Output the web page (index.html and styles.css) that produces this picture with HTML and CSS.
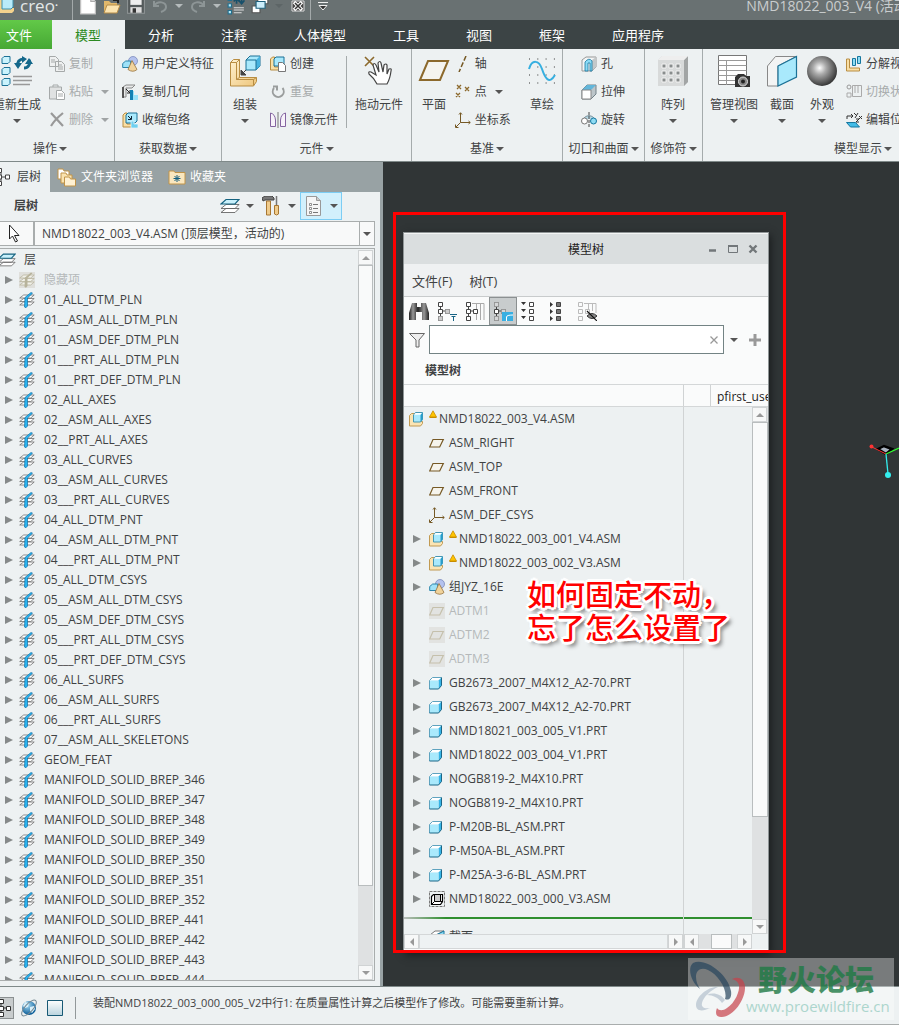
FILE: index.html
```html
<!DOCTYPE html>
<html lang="zh-CN">
<head>
<meta charset="utf-8">
<title>NMD18022_003_V4 - creo</title>
<link rel="stylesheet" href="styles.css">
</head>
<body>
<svg class="defs" aria-hidden="true">
  <linearGradient id="gold" x1="0" y1="0" x2="1" y2="1"><stop offset="0" stop-color="#fff1cf"/><stop offset="1" stop-color="#eec67c"/></linearGradient>
  <linearGradient id="ice" x1="0" y1="0" x2="0" y2="1"><stop offset="0" stop-color="#fdfefe"/><stop offset="1" stop-color="#b9d3de"/></linearGradient>
  <linearGradient id="metal" x1="0" y1="0" x2="1" y2="0"><stop offset="0" stop-color="#222"/><stop offset=".2" stop-color="#999"/><stop offset=".45" stop-color="#222"/><stop offset=".75" stop-color="#999"/><stop offset="1" stop-color="#222"/></linearGradient>
  <radialGradient id="ball" cx=".42" cy=".4" r=".62"><stop offset="0" stop-color="#fff"/><stop offset=".35" stop-color="#aaa"/><stop offset="1" stop-color="#333"/></radialGradient>
  <radialGradient id="globe" cx=".4" cy=".3" r=".7"><stop offset="0" stop-color="#a7dcf5"/><stop offset="1" stop-color="#075a96"/></radialGradient>
  <symbol id="part" viewBox="0 0 16 16"><path d="M.5 5.500l3-3h9l-3 3z" fill="#fff"/><path d="M9.500 5.500l3-3v8l-3 3.500z" fill="#36b4e6"/><path d="M.5 5.500h9v8.500h-9z" fill="#a9e9fc"/><path d="M.5 14V5.500l3-3h9" fill="none" stroke="#5fa3bf"/><path d="M12.500 2.500v8l-3 3.500h-9" fill="none" stroke="#1b6687"/></symbol>
  <symbol id="asm" viewBox="0 0 16 16"><path d="M.5 4.500l2-2h3v8h8v2l-2 2.500H.5z" fill="#fbe4b3" stroke="#c19a52"/><path d="M4.500 4l2-2.500h7v7l-2 2.500h-7z" fill="#a9e9fc" stroke="#4596b3"/><path d="M11.500 4l2-2.500v7l-2 2.500z" fill="#279dcc"/><path d="M5 3.700h6.200l1.500-1.700H6.700z" fill="#fff"/></symbol>
  <symbol id="plane" viewBox="0 0 16 16"><path d="M.7 12L4 4.500h10.300L10.700 12z" fill="#f6f4ec" stroke="#765925" stroke-width="1.200"/></symbol>
  <symbol id="plane-off" viewBox="0 0 16 16"><path d="M0 0h16v16H0z" fill="#e2e3e1"/><path d="M.7 12L4 4.500h10.300L10.700 12z" fill="none" stroke="#c5c0ac" stroke-width="1.200"/></symbol>
  <symbol id="csys" viewBox="0 0 16 16"><path d="M5.500 1v9.500H15M5.500 10.500L1 15M4 2.500L5.500.7 7 2.500M13.500 9l1.800 1.500-1.800 1.500M.5 12.500v3h3" fill="none" stroke="#765925"/></symbol>
  <symbol id="group" viewBox="0 0 16 16"><circle cx="11" cy="5" r="4.500" fill="#b4c2ee" stroke="#7c8bbd" stroke-width=".8"/><path d="M.7 7.500l3-2.500h5v6.500h-8z" fill="#9fe2f8" stroke="#2b84aa"/><path d="M10 4.500l5 9q-4 3.500-9 0z" fill="#f0d39c" stroke="#97713b" stroke-width=".8"/></symbol>
  <symbol id="layer" viewBox="0 0 16 16"><path d="M.7 6l4-3h10.500l-3.500 3zM.7 9.500l4-3h10.500l-3.500 3zM.7 13l4-3h10.500l-3.500 3z" fill="#fff" stroke="#707070" stroke-width=".8"/><path d="M6 5.500L12 .5l1.500.7L8.500 6v8L7 15.700 5.500 15z" fill="#2bb5f0" stroke="#0f70a8" stroke-width=".7"/></symbol>
  <symbol id="layer-off" viewBox="0 0 16 16"><path d="M0 0h16v16H0z" fill="#dfdfdb"/><path d="M.7 6l4-3h10.500l-3.500 3zM.7 9.500l4-3h10.500l-3.500 3zM.7 13l4-3h10.500l-3.500 3z" fill="#f1f1ea" stroke="#b9b5a0" stroke-width=".8"/><path d="M6 5.500L12 .5l1.500.7L8.500 6v8L7 15.700 5.500 15z" fill="#b7b39b"/></symbol>
  <symbol id="layers" viewBox="0 0 20 16"><path d="M1 14.500l5-4h13l-4 4zM1 10.500l5-4h13l-4 4z" fill="#fff" stroke="#666" stroke-width=".9"/><path d="M1 6l5-4.500h13L15 6z" fill="#c8f0fb" stroke="#146380" stroke-width="1.200"/></symbol>
  <symbol id="warn" viewBox="0 0 8 10"><path d="M4 .8L7.500 7h-7z" fill="#ffc400" stroke="#c88d00" stroke-width=".8"/><path d="M.5 7.500h7" stroke="#c88d00"/></symbol>
  <symbol id="tree" viewBox="0 0 20 20"><path d="M3.500 5v10M3.500 10h5" stroke="#444" fill="none"/><path d="M1.500 1.500h4v4h-4zM1.500 8.500h4v4h-4zM1.500 15.500h4v4h-4zM8.500 8.500h4v4h-4z" fill="#fff" stroke="#444"/></symbol>
</svg>

<header class="titlebar">
  <svg class="i16" viewBox="0 0 16 16"><path d="M0 2h6v8h8v3l-2 2H0z" fill="#f4d28d"/><path d="M2 1h11v8l-2 2H2z" fill="#b9ebfa" stroke="#3d90ad"/></svg>
  <span class="brand">creo<sup>•</sup></span>
  <span class="bar-sep"></span>
  <button class="qa" aria-label="新建"><svg class="i18" viewBox="0 0 16 16"><path d="M1.500 0h9l4 4v11h-13z" fill="#fff" stroke="#c5c5c5"/><path d="M10.500 0v4h4" fill="#d5d5d5" stroke="#aaa"/></svg></button>
  <button class="qa" aria-label="打开"><svg class="i18" viewBox="0 0 18 16"><path d="M1 3h5l2 2h6v10H1z" fill="#e2b86b"/><path d="M4 7h13l-3 8H1z" fill="#fce4b0" stroke="#b78d48"/><path d="M10 2h5v3" stroke="#222" stroke-width="2" fill="none"/></svg></button>
  <button class="qa" aria-label="保存"><svg class="i18" viewBox="0 0 16 16"><path d="M0 0h16v15H0z" fill="#8b9192"/><path d="M1 0h14v14H1z" fill="#555b5c"/><path d="M3 0h10v7H3z" fill="#eee"/><path d="M3 9h10v5H3z" fill="#ddd"/><path d="M5 10h3v4H5z" fill="#333"/></svg></button>
  <button class="qa" aria-label="撤消"><svg class="i16" viewBox="0 0 16 16"><path d="M2 3v5h5M2 8c4-6 12-4 12 1 0 3-2 4-5 5" fill="none" stroke="#8d9596" stroke-width="2"/></svg></button>
  <button class="qa qa-drop" aria-label="撤消列表"><i class="caret pale"></i></button>
  <button class="qa" aria-label="重做"><svg class="i16" viewBox="0 0 16 16"><path d="M14 3v5H9M14 8C10 2 2 4 2 9c0 3 2 4 5 5" fill="none" stroke="#8d9596" stroke-width="2"/></svg></button>
  <button class="qa qa-drop" aria-label="重做列表"><i class="caret pale"></i></button>
  <button class="qa" aria-label="重新生成"><svg class="i18" viewBox="0 0 16 16"><path d="M1 0h3v3H1zM1 6h3v3H1zM1 12h3v3H1z" fill="#b7ebfa" stroke="#246f8d"/><path d="M6 9.500h9M6 11.500h9M6 14h7" stroke="#ddd"/><path d="M6 4l2.500-3L11 4M8.500 1v5M13 1v4M10.500 3l2.500 3 2.500-3" stroke="#17506b" stroke-width="1.500" fill="none"/></svg></button>
  <button class="qa" aria-label="窗口"><svg class="i18" viewBox="0 0 16 16"><path d="M6 0h9v6H6zM1 8h7v6H1z" fill="#fff" stroke="#555"/><path d="M4.500 4h8v6h-8z" fill="#cdeefb" stroke="#20627e"/></svg></button>
  <button class="qa qa-drop" aria-label="窗口列表"><i class="caret faint"></i></button>
  <button class="qa" aria-label="关闭"><svg class="i14" viewBox="0 0 14 14"><path d="M1 2h12v10H1z" fill="#444" stroke="#ddd"/><path d="M3 3l8 8M11 3l-8 8" stroke="#fff" stroke-width="3.500"/><path d="M4 4l6 6M10 4l-6 6" stroke="#333" stroke-width="1.500"/></svg></button>
  <span class="bar-sep"></span>
  <button class="qa" aria-label="自定义"><svg class="i10" viewBox="0 0 10 10"><path d="M0 1.500h10" stroke="#eee"/><path d="M1 4.500h8L5 9z" fill="#333" stroke="#eee"/></svg></button>
  <span class="doc-title">NMD18022_003_V4 (活动的)</span>
</header>

<nav class="tabs">
  <button class="tab file">文件</button><button class="tab active">模型</button><button class="tab">分析</button><button class="tab">注释</button><button class="tab">人体模型</button><button class="tab">工具</button><button class="tab">视图</button><button class="tab">框架</button><button class="tab">应用程序</button>
</nav>

<section class="ribbon">
  <div class="grp g-op">
    <div class="grp-body">
      <button class="big"><svg class="i34" viewBox="0 0 34 32"><path d="M2 3.500l2-2h6v5l-2 2H2zM2 14.500l2-2h6v5l-2 2H2zM2 25.500l2-2h6v5l-2 2H2z" fill="#c9f3fd" stroke="#1b7196"/><path d="M13 21.500h19M13 25.500h19M13 29.500h17" stroke="#999" stroke-width="1.600"/><path d="M18 11c-1-4 1-7 6-7M29 5c2 4-1 8-5 8" fill="none" stroke="#14688b" stroke-width="3"/><path d="M14 8h8l-4 6zM25 9h8l-4-6zM22 1l5 3-5 4z" fill="#14688b"/></svg><span>重新生成</span><i class="caret"></i></button>
      <div class="col">
        <button class="small off"><svg class="i16" viewBox="0 0 16 16"><path d="M.5.500h6l3 3v7h-9zM6.500 5.500h6l3 3v7h-9z" fill="#eef0f0" stroke="#a5a9a9"/><path d="M2 4h4M2 6h4M9 9h4M9 11h5M9 13h5" stroke="#a5a9a9"/></svg>复制</button>
        <button class="small off"><svg class="i16" viewBox="0 0 16 16"><path d="M.5 3h12v12H.5z" fill="#e0e2e2" stroke="#a5a9a9"/><path d="M4 3V1h5v2" fill="none" stroke="#a5a9a9"/><path d="M7.500 6.500h5l3 3v6h-8z" fill="#fff" stroke="#a5a9a9"/><path d="M9 10h5M9 12h5" stroke="#a5a9a9"/></svg>粘贴<i class="caret"></i></button>
        <button class="small off"><svg class="i16" viewBox="0 0 16 16"><path d="M2 1l12 13M14 1C9 5 5 9 2 14" stroke="#999" stroke-width="2.200" fill="none"/></svg>删除<i class="caret"></i></button>
      </div>
    </div>
    <div class="grp-name">操作<i class="caret"></i></div>
  </div>
  <div class="grp g-get">
    <div class="grp-body"><div class="col">
      <button class="small"><svg class="i16"><use href="#group"/></svg>用户定义特征</button>
      <button class="small"><svg class="i16" viewBox="0 0 16 16"><path d="M1 13V3l3-2h9L10 4H4v9z" fill="#e8eaea" stroke="#888"/><path d="M1 3v11" stroke="#333" stroke-width="1.500"/><path d="M4 5l4 4M8 6v3H5" stroke="#222" fill="none"/><path d="M11 7h1v4h4v5h-5z" fill="#9be2f9"/><path d="M8 6h3v10H8z" fill="#1381b3"/></svg>复制几何</button>
      <button class="small"><svg class="i16" viewBox="0 0 16 16"><path d="M1 3l2-2h2v11h6v3H1z" fill="#f9dfa5" stroke="#b88d42"/><path d="M4 3l2-2h9v8l-2 2H4z" fill="#a9e9fc" stroke="#1b7196"/><path d="M6 4l3 3M9.500 4v3.500H6" stroke="#123" fill="none"/><path d="M9 9h3v3h4v4H9z" fill="#6fd0f0" stroke="#fff" stroke-width=".6"/></svg>收缩包络</button>
    </div></div>
    <div class="grp-name">获取数据<i class="caret"></i></div>
  </div>
  <div class="grp g-comp">
    <div class="grp-body">
      <button class="big w46"><svg class="i32" viewBox="0 0 32 32"><path d="M1.500 7.500l3-3h6v18h17v4l-3 4.500h-23z" fill="url(#gold)" stroke="#b88d42"/><path d="M1.500 7.500h6v17h17v6M7.500 7.500l3-3M24.500 24.500l3-2M7.500 24.500l3-2" fill="none" stroke="#b88d42"/><path d="M17 5l4-4h10v10l-4 4H17z" fill="#a9e9fc" stroke="#1b7196"/><path d="M27 5l4-4v10l-4 4z" fill="#46b3df"/><path d="M17 5h10v10" fill="none" stroke="#1b7196"/><path d="M17 15l-4 4M12 15v5h5z" stroke="#444" fill="#444"/></svg><span>组装</span><i class="caret"></i></button>
      <div class="col">
        <button class="small"><svg class="i16" viewBox="0 0 16 16"><path d="M.5 3l2-2h2v10h5v3h-9z" fill="#f9dfa5" stroke="#b88d42"/><path d="M4 3l2-2h8v7l-2 2H4z" fill="#a9e9fc" stroke="#1b7196"/><path d="M8.500 6.500h4l3 3v6h-7z" fill="#fff" stroke="#777"/></svg>创建</button>
        <button class="small off"><svg class="i16" viewBox="0 0 16 16"><path d="M4 4a5.500 5.500 0 1 0 8.500 0M3 2.500h4v4" fill="none" stroke="#9a9d9d" stroke-width="2"/></svg>重复</button>
        <button class="small"><svg class="i16" viewBox="0 0 16 16"><path d="M.5 1v13.500h5V8Q5 2 .5 1zM15.500 1v13.500h-5V8Q11 2 15.500 1z" fill="#f7f2fa" stroke="#8464a0"/><path d="M8 0v16" stroke="#777"/></svg>镜像元件</button>
      </div>
      <span class="v-sep"></span>
      <button class="big w64"><svg class="i32" viewBox="0 0 32 32"><path d="M2 2l9 9M11 2l-9 9" stroke="#8c692c" stroke-width="1.600"/><path d="M14 29q-3-6-8-10-1-3 2-2l5 3-3-10q1-3 3 0l3 7-1-9q2-3 3 0l2 9 1-7q2-2 3 0v9l2-5q3-1 2 2-1 8-4 13z" fill="#fff" stroke="#444" stroke-width="1.200"/></svg><span>拖动元件</span></button>
    </div>
    <div class="grp-name">元件<i class="caret"></i></div>
  </div>
  <div class="grp g-datum">
    <div class="grp-body">
      <button class="big w46"><svg class="i32" viewBox="0 0 32 32"><path d="M2 25L10 6h20L22 25z" fill="#f5f4ef" stroke="#8c692c" stroke-width="2"/></svg><span>平面</span></button>
      <div class="col">
        <button class="small"><svg class="i16" viewBox="0 0 16 16"><path d="M11 0L4 16" stroke="#765925" stroke-width="1.500" stroke-dasharray="5 2"/></svg>轴</button>
        <button class="small"><svg class="i16" viewBox="0 0 16 16"><path d="M2 1l4 4M6 1L2 5M10 3l4 4M14 3l-4 4M1 9l4 4M5 9l-4 4" stroke="#8c692c" stroke-width="1.300"/></svg>点<i class="caret"></i></button>
        <button class="small"><svg class="i16"><use href="#csys"/></svg>坐标系</button>
      </div>
      <button class="big w46"><svg class="i32" viewBox="0 0 32 32"><path d="M3 4h26M3 12h26M3 20h26M3 28h26" stroke="#333" stroke-width="1" stroke-dasharray="1 7.300"/><path d="M3 14C6 4 13 5 16 14s7 16 13 6" fill="none" stroke="#36afe0" stroke-width="2"/></svg><span>草绘</span></button>
    </div>
    <div class="grp-name">基准<i class="caret"></i></div>
  </div>
  <div class="grp g-cut">
    <div class="grp-body"><div class="col">
      <button class="small"><svg class="i16" viewBox="0 0 16 16"><path d="M1 4l4-3h10v10l-4 4H1z" fill="#f3f5f5" stroke="#999"/><path d="M11 4l4-3v10l-4 4z" fill="#c3c8c9"/><path d="M4 15V6q4-5 7-1v10H9V7H7v8z" fill="#8bdbf6" stroke="#17779f" stroke-width=".8"/></svg>孔</button>
      <button class="small"><svg class="i16" viewBox="0 0 16 16"><path d="M1 6l5-5h9v9l-5 5H1z" fill="#bcc5c9" stroke="#738188"/><path d="M1 6l5-5h9l-5 5z" fill="#62b6da"/><path d="M1 6h9v9H1z" fill="#fff" stroke="#888"/></svg>拉伸</button>
      <button class="small"><svg class="i16" viewBox="0 0 16 16"><path d="M2 7q6-7 12 0" fill="#b6d8e5" stroke="#7c949f"/><circle cx="3.500" cy="9" r="3" fill="#fff" stroke="#777"/><circle cx="12.500" cy="9" r="3" fill="#8edcf4" stroke="#16779f"/><path d="M8 0v16" stroke="#444" stroke-dasharray="3 1"/></svg>旋转</button>
    </div></div>
    <div class="grp-name">切口和曲面<i class="caret"></i></div>
  </div>
  <div class="grp g-mod">
    <div class="grp-body"><button class="big w56"><svg class="i32" viewBox="0 0 32 32"><path d="M1 5l4-4h26v26l-4 4H1z" fill="#d8dada"/><path d="M27 5l4-4v26l-4 4z" fill="#a2a5a5"/><path d="M1 5l4-4h26l-4 4z" fill="#eee"/><path d="M5 9h4v4H5zM12 9h4v4h-4zM19 9h4v4h-4zM5 16h4v4H5zM12 16h4v4h-4zM19 16h4v4h-4zM5 23h4v4H5zM12 23h4v4h-4zM19 23h4v4h-4z" fill="#898d8d" stroke="#f3f3f3"/></svg><span>阵列</span><i class="caret"></i></button></div>
    <div class="grp-name">修饰符<i class="caret"></i></div>
  </div>
  <div class="grp g-view">
    <div class="grp-body">
      <button class="big w56"><svg class="i32" viewBox="0 0 32 32"><path d="M.5.500h28v29H.5z" fill="#fff" stroke="#777"/><path d="M.5 5.500h28M.5 10.500h28M.5 15.500h28M.5 20.500h28M.5 25.500h28M8.500 5v25" stroke="#999"/><path d="M17 22l3-3h6l2 2h4v11H17z" fill="#333"/><circle cx="25" cy="26.500" r="4.500" fill="#888" stroke="#ddd"/><circle cx="25" cy="26.500" r="2" fill="#222"/></svg><span>管理视图</span><i class="caret"></i></button>
      <button class="big w40"><svg class="i32" viewBox="0 0 32 32"><path d="M1.500 11l8-9.500h21L12 11v20H1.500z" fill="#f3f4f4" stroke="#888"/><path d="M12 11L30.500 1.500V22L12 31z" fill="#a9e9fc" stroke="#1b7196" stroke-width="1.200"/></svg><span>截面</span><i class="caret"></i></button>
      <button class="big w40"><svg class="i32" viewBox="0 0 32 32"><circle cx="16" cy="16" r="15" fill="url(#ball)"/></svg><span>外观</span><i class="caret"></i></button>
      <div class="col">
        <button class="small"><svg class="i16" viewBox="0 0 16 16"><path d="M.5 3h3v9h10v3H.5z" fill="#f9dfa5" stroke="#b88d42"/><path d="M6.500 2.500h3v7h-3zM11.500.500h3v7h-3z" fill="#8edcf4" stroke="#16779f"/></svg>分解视图</button>
        <button class="small off"><svg class="i16" viewBox="0 0 16 16"><circle cx="3" cy="3" r="2" fill="none" stroke="#999"/><path d="M1 9h4v4H1zM6.500 1.500h9v11h-9zM9 2v7M12 2v7" fill="none" stroke="#aaa"/></svg>切换状态</button>
        <button class="small"><svg class="i16" viewBox="0 0 16 16"><path d="M1 7V4h6M5 2l2 2-2 2M8 1l2 2M12 1L9 6M13 4l3 3M16 4l-3 3M10 7h3l-3 3h3" fill="none" stroke="#333"/><path d="M.5 10.500h9l4 4.500h-9z" fill="#43bce7" stroke="#16779f"/></svg>编辑位置</button>
      </div>
    </div>
    <div class="grp-name">模型显示<i class="caret"></i></div>
  </div>
</section>

<main class="work">
  <aside class="nav">
    <div class="nav-tabs">
      <button class="nav-tab current"><svg class="i14" viewBox="0 0 14 20"><path d="M0 10h6M1 6v8" stroke="#444"/><path d="M-2.500 1.500h4v4h-4zM-2.500 14.500h4v4h-4zM-2.500 8h4v4h-4zM5.500 8h4v4h-4z" fill="#fff" stroke="#444"/></svg>层树</button>
      <button class="nav-tab"><svg class="i20" viewBox="0 0 20 20"><path d="M1 2h5l1 2h5v8H1z" fill="#fff" stroke="#c19449"/><path d="M4 6h5l1 2h5v8H4z" fill="#fae3b0" stroke="#c19449"/><path d="M7.500 10h5l1 2h5v7h-11z" fill="#fff1d3" stroke="#c19449"/></svg>文件夹浏览器</button>
      <button class="nav-tab"><svg class="i18" viewBox="0 0 18 18"><path d="M1 3h5l1 1.500h10V16H1z" fill="#fae7bf" stroke="#c19449"/><path d="M9 7v7M5.500 10.500h7M6.500 8l5 5M11.500 8l-5 5" stroke="#145f80"/></svg>收藏夹</button>
    </div>
    <div class="nav-head">
      <h2>层树</h2>
      <button class="tool" aria-label="层"><svg class="i20"><use href="#layers"/></svg><i class="caret"></i></button>
      <button class="tool" aria-label="设置"><svg class="i20" viewBox="0 0 20 20"><path d="M0 2l3-2h7l2 2v2H3L1 5z" fill="#777" stroke="#444"/><path d="M4.500 5h4v14h-4z" fill="#f0cc8c" stroke="#a77632"/><path d="M14.500 0v9" stroke="#777" stroke-width="1.500"/><path d="M12.500 9.500h4V18q-2 2-4 0z" fill="#f0cc8c" stroke="#a77632"/></svg><i class="caret"></i></button>
      <button class="tool on" aria-label="显示"><svg class="i20" viewBox="0 0 20 20"><path d="M2.500.500h10l4 4v15h-14z" fill="#f5f5f5" stroke="#999"/><path d="M12.500.500v4h4" fill="#ccc" stroke="#999"/><path d="M9 8.500h5M9 12.500h5M9 16.500h5" stroke="#777"/><path d="M5.500 7.500h2v2h-2zM5.500 11.500h2v2h-2zM5.500 15.500h2v2h-2z" fill="#fff" stroke="#777" stroke-width=".8"/></svg><i class="caret"></i></button>
    </div>
    <div class="picker">
      <button class="pick" aria-label="选择"><svg class="i20" viewBox="0 0 20 20"><path d="M3.500 1v14l3-3 3 6 2-1-3-5.500h4.500z" fill="#fff" stroke="#222"/></svg></button>
      <select class="model" aria-label="活动模型"><option>NMD18022_003_V4.ASM (顶层模型，活动的)</option></select>
      <span class="model-arrow"><i class="caret"></i></span>
    </div>
    <div class="layer-box">
      <ul class="layer-list">
        <li class="top"><svg class="i18"><use href="#layers"/></svg>层</li>
        <li class="dim"><svg class="i16"><use href="#layer-off"/></svg>隐藏项</li>
        <li><svg class="i16"><use href="#layer"/></svg>01_ALL_DTM_PLN</li>
        <li><svg class="i16"><use href="#layer"/></svg>01__ASM_ALL_DTM_PLN</li>
        <li><svg class="i16"><use href="#layer"/></svg>01__ASM_DEF_DTM_PLN</li>
        <li><svg class="i16"><use href="#layer"/></svg>01___PRT_ALL_DTM_PLN</li>
        <li><svg class="i16"><use href="#layer"/></svg>01___PRT_DEF_DTM_PLN</li>
        <li><svg class="i16"><use href="#layer"/></svg>02_ALL_AXES</li>
        <li><svg class="i16"><use href="#layer"/></svg>02__ASM_ALL_AXES</li>
        <li><svg class="i16"><use href="#layer"/></svg>02__PRT_ALL_AXES</li>
        <li><svg class="i16"><use href="#layer"/></svg>03_ALL_CURVES</li>
        <li><svg class="i16"><use href="#layer"/></svg>03__ASM_ALL_CURVES</li>
        <li><svg class="i16"><use href="#layer"/></svg>03___PRT_ALL_CURVES</li>
        <li><svg class="i16"><use href="#layer"/></svg>04_ALL_DTM_PNT</li>
        <li><svg class="i16"><use href="#layer"/></svg>04__ASM_ALL_DTM_PNT</li>
        <li><svg class="i16"><use href="#layer"/></svg>04___PRT_ALL_DTM_PNT</li>
        <li><svg class="i16"><use href="#layer"/></svg>05_ALL_DTM_CSYS</li>
        <li><svg class="i16"><use href="#layer"/></svg>05__ASM_ALL_DTM_CSYS</li>
        <li><svg class="i16"><use href="#layer"/></svg>05__ASM_DEF_DTM_CSYS</li>
        <li><svg class="i16"><use href="#layer"/></svg>05___PRT_ALL_DTM_CSYS</li>
        <li><svg class="i16"><use href="#layer"/></svg>05___PRT_DEF_DTM_CSYS</li>
        <li><svg class="i16"><use href="#layer"/></svg>06_ALL_SURFS</li>
        <li><svg class="i16"><use href="#layer"/></svg>06__ASM_ALL_SURFS</li>
        <li><svg class="i16"><use href="#layer"/></svg>06___PRT_ALL_SURFS</li>
        <li><svg class="i16"><use href="#layer"/></svg>07__ASM_ALL_SKELETONS</li>
        <li><svg class="i16"><use href="#layer"/></svg>GEOM_FEAT</li>
        <li><svg class="i16"><use href="#layer"/></svg>MANIFOLD_SOLID_BREP_346</li>
        <li><svg class="i16"><use href="#layer"/></svg>MANIFOLD_SOLID_BREP_347</li>
        <li><svg class="i16"><use href="#layer"/></svg>MANIFOLD_SOLID_BREP_348</li>
        <li><svg class="i16"><use href="#layer"/></svg>MANIFOLD_SOLID_BREP_349</li>
        <li><svg class="i16"><use href="#layer"/></svg>MANIFOLD_SOLID_BREP_350</li>
        <li><svg class="i16"><use href="#layer"/></svg>MANIFOLD_SOLID_BREP_351</li>
        <li><svg class="i16"><use href="#layer"/></svg>MANIFOLD_SOLID_BREP_352</li>
        <li><svg class="i16"><use href="#layer"/></svg>MANIFOLD_SOLID_BREP_441</li>
        <li><svg class="i16"><use href="#layer"/></svg>MANIFOLD_SOLID_BREP_442</li>
        <li><svg class="i16"><use href="#layer"/></svg>MANIFOLD_SOLID_BREP_443</li>
        <li><svg class="i16"><use href="#layer"/></svg>MANIFOLD_SOLID_BREP_444</li>
      </ul>
      <div class="vscroll"><button aria-label="向上"><i class="arr up"></i></button><div class="track"><div class="thumb layer-thumb"></div></div><button aria-label="向下"><i class="arr down"></i></button></div>
    </div>
  </aside>

  <section class="canvas">
    <svg class="triad" viewBox="0 0 30 40"><path d="M9 8l6-3 8 3-6 5z" fill="#a9b3c0" stroke="#000" stroke-width="2.500"/><path d="M17 13L2 5.500" stroke="#f33"/><path d="M17 13l13-6" stroke="#3f3" stroke-width="1.300"/><path d="M17 13l2 20" stroke="#3ee" stroke-width="1.300"/><circle cx="2.500" cy="5.500" r="2" fill="#f33"/><circle cx="19" cy="34" r="3" fill="#3ee"/></svg>
    <div class="win">
      <div class="win-title"><span>模型树</span>
        <div class="win-btns">
          <button aria-label="最小化"><svg class="i10" viewBox="0 0 10 10"><path d="M1 6.500h7" stroke="#72777a" stroke-width="2.500"/></svg></button>
          <button aria-label="最大化"><svg class="i10" viewBox="0 0 10 10"><path d="M.5 1.500h9v7h-9z" fill="none" stroke="#72777a"/><path d="M0 2h10" stroke="#72777a" stroke-width="2"/></svg></button>
          <button aria-label="关闭窗口"><svg class="i10" viewBox="0 0 10 10"><path d="M1.500 1.500l7 7M8.500 1.500l-7 7" stroke="#72777a" stroke-width="2.400"/></svg></button>
        </div>
      </div>
      <div class="win-menu"><button>文件(F)</button><button>树(T)</button></div>
      <div class="win-tools">
        <button aria-label="查找"><svg class="i20" viewBox="0 0 20 20"><path d="M3 2h5v4h4V2h5l3 10v7h-7v-8H7v8H0v-7z" fill="url(#metal)"/></svg></button>
        <button aria-label="过滤树"><svg class="i20" viewBox="0 0 20 20"><use href="#tree"/><path d="M8.500 8.500h4v4h-4zM1.500 15.500h4v4h-4z" fill="#ccc" stroke="#999"/><path d="M13 13.500h7M14.500 15.500h4M16.500 16v4" stroke="#166384"/></svg></button>
        <button aria-label="树列"><svg class="i20" viewBox="0 0 20 20"><use href="#tree"/><path d="M7 2.500h4.500V8M11 2.500h4.500V19M15 2.500h4V19M11.500 13v6" fill="none" stroke="#aaa"/></svg></button>
        <button class="down" aria-label="显示树"><svg class="i20" viewBox="0 0 20 20"><use href="#tree"/><path d="M1.500 1.500h4v4h-4zM1.500 15.500h4v4h-4zM8.500 8.500h4v4h-4z" fill="#d5d7d8" stroke="#999"/><path d="M9 11h11v9H9z" fill="#38afe2"/><path d="M13.500 20v-4q0-2 6.500-2" fill="none" stroke="#fff"/></svg></button>
        <button aria-label="全部展开"><svg class="i20" viewBox="0 0 20 20"><path d="M0 1h5L2.500 4zM0 8h5l-2.500 3zM0 15h5l-2.500 3z" fill="#333"/><path d="M8.500 1.500h4v4h-4zM8.500 8.500h4v4h-4zM8.500 15.500h4v4h-4z" fill="#fff" stroke="#444"/></svg></button>
        <button aria-label="全部折叠"><svg class="i20" viewBox="0 0 20 20"><path d="M1 1v5l3-2.500zM1 8v5l3-2.500zM1 15v5l3-2.500z" fill="#333"/><path d="M7.500 1.500h4v4h-4zM7.500 8.500h4v4h-4zM7.500 15.500h4v4h-4z" fill="#777" stroke="#444"/></svg></button>
        <button aria-label="隐藏列"><svg class="i20" viewBox="0 0 20 20"><path d="M1.500 1.500h4v4h-4zM1.500 8.500h4v4h-4zM1.500 15.500h4v4h-4zM8.500 8.500h4v4h-4zM7 2.500h4.500V8M11 2.500h4.500V10M15 2.500h4V12" fill="none" stroke="#bbb"/><path d="M10 15q5-5 10 0-5 5-10 0z" fill="#888" stroke="#333"/><path d="M10 10l10 10" stroke="#111" stroke-width="1.200"/></svg></button>
      </div>
      <div class="win-search">
        <svg class="i16" viewBox="0 0 16 16"><path d="M.5 1.500h15L10 8v7H7V8z" fill="#eee" stroke="#666"/></svg>
        <div class="search-box"><input type="text" aria-label="搜索模型树"><button aria-label="清除"><svg class="i8" viewBox="0 0 8 8"><path d="M.5.500l7 7M7.500.500l-7 7" stroke="#999" stroke-width="1.300"/></svg></button></div>
        <button class="mini" aria-label="搜索选项"><i class="caret"></i></button>
        <button class="mini add" aria-label="添加"><svg class="i12" viewBox="0 0 12 12"><path d="M6 0v12M0 6h12" stroke="#999" stroke-width="3"/></svg></button>
      </div>
      <h3>模型树</h3>
      <div class="cols-head"><span class="c1"></span><span class="c2"></span><span class="c3">pfirst_used</span></div>
      <div class="tree-body">
        <div class="tree-main">
          <ul class="model-list">
            <li class="root"><svg class="i16"><use href="#asm"/></svg><svg class="warn"><use href="#warn"/></svg>NMD18022_003_V4.ASM</li>
            <li class="leaf"><svg class="i16"><use href="#plane"/></svg>ASM_RIGHT</li>
            <li class="leaf"><svg class="i16"><use href="#plane"/></svg>ASM_TOP</li>
            <li class="leaf"><svg class="i16"><use href="#plane"/></svg>ASM_FRONT</li>
            <li class="leaf"><svg class="i16"><use href="#csys"/></svg>ASM_DEF_CSYS</li>
            <li><svg class="i16"><use href="#asm"/></svg><svg class="warn"><use href="#warn"/></svg>NMD18022_003_001_V4.ASM</li>
            <li><svg class="i16"><use href="#asm"/></svg><svg class="warn"><use href="#warn"/></svg>NMD18022_003_002_V3.ASM</li>
            <li><svg class="i16"><use href="#group"/></svg>组JYZ_16E</li>
            <li class="leaf dim"><svg class="i16"><use href="#plane-off"/></svg>ADTM1</li>
            <li class="leaf dim"><svg class="i16"><use href="#plane-off"/></svg>ADTM2</li>
            <li class="leaf dim"><svg class="i16"><use href="#plane-off"/></svg>ADTM3</li>
            <li><svg class="i16"><use href="#part"/></svg>GB2673_2007_M4X12_A2-70.PRT</li>
            <li><svg class="i16"><use href="#part"/></svg>GB2673_2007_M4X12_A2-70.PRT</li>
            <li><svg class="i16"><use href="#part"/></svg>NMD18021_003_005_V1.PRT</li>
            <li><svg class="i16"><use href="#part"/></svg>NMD18022_003_004_V1.PRT</li>
            <li><svg class="i16"><use href="#part"/></svg>NOGB819-2_M4X10.PRT</li>
            <li><svg class="i16"><use href="#part"/></svg>NOGB819-2_M4X10.PRT</li>
            <li><svg class="i16"><use href="#part"/></svg>P-M20B-BL_ASM.PRT</li>
            <li><svg class="i16"><use href="#part"/></svg>P-M50A-BL_ASM.PRT</li>
            <li><svg class="i16"><use href="#part"/></svg>P-M25A-3-6-BL_ASM.PRT</li>
            <li><svg class="i16" viewBox="0 0 16 16"><path d="M.5.500h15v15H.5z" fill="none" stroke="#777" stroke-dasharray="3 1"/><path d="M2.500 5.500l2-2h9v7l-2 3h-9z" fill="#fff" stroke="#000" stroke-width="1.200"/><path d="M5.500 3.500h6v7h-6zM5.500 10.500l-3 3M11.500 10.500h2" fill="#ccc" stroke="#000"/></svg>NMD18022_003_000_V3.ASM</li>
            <li class="insert"></li>
            <li class="leaf"><svg class="i16" viewBox="0 0 16 16"><path d="M1 6l5-4h9L7 6v9H1z" fill="#fff" stroke="#777"/><path d="M7 6l8-4v8l-8 5z" fill="#8edcf4" stroke="#16779f"/></svg>截面</li>
          </ul>
          <div class="hscroll"><button aria-label="向左"><i class="arr left"></i></button><div class="htrack plain"></div><button aria-label="向右"><i class="arr right"></i></button></div>
        </div>
        <div class="tree-side">
          <div class="side-space"></div>
          <div class="hscroll"><button aria-label="列向左"><i class="arr left"></i></button><div class="htrack"><div class="hthumb"></div></div><button aria-label="列向右"><i class="arr right"></i></button></div>
        </div>
        <div class="vscroll tree-scroll"><button aria-label="树向上"><i class="arr up"></i></button><div class="track"><div class="thumb tree-thumb"></div></div><button aria-label="树向下"><i class="arr down"></i></button></div>
      </div>
    </div>
    <div class="frame"></div>
    <p class="note">如何固定不动，<br>忘了怎么设置了</p>
  </section>
</main>

<footer class="status">
  <button class="s-btn" aria-label="导航器"><svg class="i14" viewBox="0 0 14 20"><path d="M0 10h9M1 4v12" stroke="#333"/><path d="M-.5 1.500h4v4h-4zM-.5 14.500h4v4h-4zM-.5 8.500h4v4h-4zM6.500 8.500h4v4h-4z" fill="#fff" stroke="#333"/></svg></button>
  <svg class="i18" viewBox="0 0 18 18"><circle cx="9" cy="9" r="7" fill="url(#globe)"/><path d="M5 3l4 1-1 4-3 1-2-2zM10 8l4-1 1 3-3 4-2-2z" fill="#d9f0fa"/><ellipse cx="9" cy="9" rx="10" ry="4" fill="none" stroke="#758892" transform="rotate(-48 9 9)"/></svg>
  <svg class="i16" viewBox="0 0 16 16"><path d="M.5.500h15v15H.5z" fill="url(#ice)" stroke="#175975"/></svg>
  <span class="s-sep"></span>
  <span class="s-msg">装配NMD18022_003_000_005_V2中行1: 在质量属性计算之后模型作了修改。可能需要重新计算。</span>
</footer>

<div class="mark">
  <svg class="mark-logo" viewBox="0 0 60 58"><path fill-rule="evenodd" fill="#27455d" d="M5 3C17-3 40 14 43 31c1 7-2 10-6 8 3-8-6-24-17-29C13 7 8 10 8 17c0 5 2 9 4 12C3 22-1 8 5 3z"/><path fill-rule="evenodd" fill="#c8424b" d="M44 19c6-3 12-1 13 7 1 14-13 32-24 31-5 0-6-4-4-9 2 3 6 3 10 0 8-5 13-17 12-23-1-3-3-5-7-6z"/><path fill-rule="evenodd" fill="#b3c1ce" d="M30 27c-9-1-22 9-22 18 0 6 6 7 14 3-6 1-9-1-8-5 1-6 9-13 16-16zM37 40c-4-6-12-8-18-5 6 0 12 3 15 8z"/></svg>
  <div class="mark-text"><strong>野火论坛</strong><span>www.proewildfire.cn</span></div>
</div>
</body>
</html>
```
FILE: styles.css
```css
* { box-sizing: border-box; }
html, body { height: 100%; }
body {
  margin: 0;
  display: flex;
  flex-direction: column;
  position: relative;
  overflow: hidden;
  background: #edf1f2;
  color: #3f4243;
  font: 12px/16px "Open Sans", "Noto Sans CJK SC", sans-serif;
}
button, input, select { font: inherit; color: inherit; border: 0; padding: 0; margin: 0; background: none; }
ul, h2, h3, p { margin: 0; padding: 0; list-style: none; }
svg { flex: none; display: block; }
.defs { position: absolute; width: 0; height: 0; }
.i8 { width: 8px; height: 8px; }
.i10 { width: 10px; height: 10px; }
.i12 { width: 12px; height: 12px; }
.i14 { width: 14px; height: 20px; }
.i16 { width: 16px; height: 16px; }
.i18 { width: 18px; height: 18px; }
.i20 { width: 20px; height: 20px; }
.i32 { width: 32px; height: 32px; }
.i34 { width: 34px; height: 32px; }

.caret { flex: none; display: block; border: solid transparent; border-width: 4px 4px 0; border-top-color: #555; }
.caret.pale { border-top-color: #b5bbbc; }
.caret.faint { border-top-color: #5d6566; }

/* title bar */
.titlebar { flex: none; height: 20px; padding-bottom: 8px; display: flex; align-items: center; background: #697172; }
.brand { width: 56px; padding-left: 4px; font-size: 17px; color: #e4e8e8; }
.brand sup { font-size: 8px; vertical-align: 4px; line-height: 8px; }
.bar-sep { width: 1px; height: 28px; background: #a3a9aa; }
.bar-sep + .qa { margin-left: 3px; }
.bar-sep + .qa:last-of-type { margin-left: 0; }
.qa { width: 24px; height: 20px; flex: none; display: flex; align-items: center; justify-content: center; }
.qa-drop { width: 14px; }
.doc-title { margin-left: auto; margin-right: -27px; font-size: 14px; color: #c9cdce; white-space: nowrap; }

/* ribbon tabs */
.tabs { flex: none; height: 29px; display: flex; background: #3c4445; }
.tab { padding: 0 24px 0 23px; color: #fff; font-size: 13px; white-space: nowrap; }
.tab.file { width: 52px; padding: 0 14px 0 0; background: linear-gradient(#62c948, #46a834); }
.tab.active { background: #edf1f2; color: #2c8a22; }

/* ribbon */
.ribbon { flex: none; display: flex; overflow: hidden; border-bottom: 1px solid #7f8989; }
.grp { flex: none; display: flex; flex-direction: column; border-right: 1px solid #a5abac; }
.g-op { width: 129px; margin-left: -14px; }
.g-get { width: 107px; }
.g-comp { width: 190px; }
.g-datum { width: 151px; }
.g-cut { width: 82px; }
.g-mod { width: 58px; }
.g-view { width: 318px; }
.grp-body { height: 85px; padding-top: 1px; display: flex; }
.grp-name { height: 27px; display: flex; align-items: center; justify-content: center; gap: 2px; padding-top: 2px; }
.big { width: 62px; padding-top: 5px; display: flex; flex-direction: column; align-items: center; white-space: nowrap; }
.big span { margin-top: 10px; }
.big .caret { margin-top: 6px; }
.w40 { width: 40px; }
.w46 { width: 46px; }
.w56 { width: 56px; }
.w64 { width: 64px; }
.col { display: flex; flex-direction: column; }
.small { height: 28px; display: flex; align-items: center; gap: 4px; white-space: nowrap; }
.small .caret { margin-left: 4px; }
.off { color: #a7abac; }
.off .caret { border-top-color: #a0a4a5; }
.g-op .col { padding-left: 1px; }
.g-get .col { padding-left: 7px; }
.g-comp .col { padding-left: 2px; width: 78px; }
.g-datum .grp-body { padding-left: 2px; }
.g-datum .col { width: 72px; }
.g-datum .col + .big { margin-left: 6px; }
.g-datum .col { padding-left: 1px; }
.g-datum .small .caret { margin-left: 4px; }
.g-cut .col { padding-left: 18px; }
.g-view { padding-left: 3px; }
.g-view .col { padding-left: 4px; }
.v-sep { width: 1px; height: 72px; margin-top: 6px; background: #a5abac; }

/* workspace */
.work { flex: 1; min-height: 0; display: flex; }
.nav { width: 383px; flex: none; display: flex; flex-direction: column; border-right: 3px solid #98a2a4; padding-bottom: 5px; }
.nav-tabs { height: 30px; display: flex; background: #98a2a4; }
.nav-tab { display: flex; align-items: center; gap: 4px; padding: 0 8px 0 7px; color: #fff; }
.nav-tab.current { width: 50px; padding: 0; gap: 3px; background: #edf1f2; color: #3f4243; }
.nav-head { height: 28px; display: flex; align-items: center; padding-right: 38px; }
.nav-head h2 { flex: 1; padding-left: 14px; font-size: 12px; font-weight: 600; }
.tool { height: 28px; width: 42px; display: flex; align-items: center; gap: 6px; padding-left: 4px; }
.tool.on { background: #d2f0fc; border: 1px solid #7ccdf4; padding-left: 3px; }
.picker { height: 25px; margin-top: 1px; display: flex; margin-right: 5px; position: relative; }
.pick { width: 34px; padding-left: 6px; border: 1px solid #a9adad; border-left: 0; background: #f8f9f9; }
.model { flex: 1; padding: 0 22px 0 7px; background: #f8f9f9; border: 1px solid #a9adad; border-radius: 0; appearance: none; }
.model-arrow { position: absolute; right: 0; top: 0; width: 16px; height: 25px; border: 1px solid #a9adad; display: flex; align-items: center; justify-content: center; pointer-events: none; }
.layer-box { flex: 1; min-height: 0; margin: 2px 5px 0 0; display: flex; border: 1px solid #a9adad; border-left: 0; padding: 1px 1px 0 0; }
.layer-list { flex: 1; overflow: hidden; }
.layer-list li { height: 20px; display: flex; align-items: center; gap: 9px; padding-left: 5px; white-space: nowrap; }
.layer-list li::before, .model-list li::before { content: ""; border: solid transparent; border-width: 4px 0 4px 8px; border-left-color: #858989; }
.layer-list li::before { margin-right: -3px; }
.layer-list .top { padding-left: 0; gap: 8px; margin-left: -2px; }
.layer-list .top::before, .model-list .root::before { display: none; }
.dim { color: #b5b9ba; }

/* scroll bars */
.vscroll { width: 15px; flex: none; display: flex; flex-direction: column; background: #dfe1e2; }
.vscroll button, .hscroll button { width: 15px; height: 15px; flex: none; display: flex; align-items: center; justify-content: center; background: #f7f8f8; border: 1px solid #d0d3d4; }
.track { flex: 1; }
.thumb { background: #f9fafa; border: 1px solid #b9bdbe; }
.layer-thumb { height: 621px; }
.tree-thumb { height: 395px; }
.arr { border: 4px solid transparent; }
.arr.up { border-top: 0; border-bottom-color: #999; }
.arr.down { border-bottom: 0; border-top-color: #999; }
.arr.left { border-left: 0; border-right-color: #999; }
.arr.right { border-right: 0; border-left-color: #999; }
.hscroll { height: 15px; display: flex; }
.htrack { flex: 1; background: #dfe1e2; padding: 0 5px 0 12px; }
.htrack.plain { background: #eef2f3; border: 1px solid #d4d7d8; }
.hthumb { height: 15px; background: #fafafa; border: 1px solid #b9bdbe; }

/* graphics area */
.canvas { flex: 1; position: relative; background: #303536; }
.triad { position: absolute; right: 0; top: 279px; width: 30px; height: 40px; }
.win { position: absolute; left: 20px; top: 70px; width: 366px; padding-bottom: 2px; background: #fafbfb; border: 1px solid #8f9596; box-shadow: 2px 3px 8px #1a1d1e; }
.win-title { height: 31px; padding-top: 2px; display: flex; align-items: center; justify-content: center; background: #dadedf; border-top: 1px solid #f4f5f5; color: #1e2122; position: relative; }
.win-btns { position: absolute; right: 10px; top: 0; height: 30px; display: flex; gap: 10px; align-items: center; }
.win-menu { height: 33px; padding: 2px 8px 0; display: flex; gap: 17px; background: #eff1f2; border-bottom: 1px solid #c8cbcc; font-size: 13px; }
.win-tools { height: 28px; display: flex; padding-left: 1px; }
.win-tools button { width: 28px; display: flex; align-items: center; justify-content: center; }
.win-tools .down { background: #c8cccd; border: 1px solid #8b9091; }
.win-search { height: 29px; display: flex; align-items: center; padding: 0 2px 0 5px; }
.search-box { flex: 1; height: 29px; margin-left: 4px; display: flex; align-items: center; background: #fff; border: 1px solid #738384; padding-right: 5px; }
.search-box input { flex: 1; min-width: 0; height: 26px; outline: 0; }
.mini { width: 20px; display: flex; justify-content: center; }
.add { width: 22px; }
.win h3 { height: 30px; padding: 9px 0 0 21px; font-size: 12px; font-weight: 600; line-height: 16px; }
.cols-head { height: 23px; display: flex; border: solid #d4d7d8; border-width: 1px 0; color: #1e2122; overflow: hidden; }
.c1 { width: 280px; border-right: 1px solid #d0d3d4; flex: none; }
.c2 { width: 27px; border-right: 1px solid #d0d3d4; flex: none; }
.c3 { padding: 4px 0 0 6px; }
.tree-body { display: flex; background: #edf1f2; }
.tree-main { width: 280px; border-right: 1px solid #d0d3d4; }
.model-list { height: 527px; overflow: hidden; }
.model-list li { height: 24px; display: flex; align-items: center; gap: 4px; padding-left: 9px; white-space: nowrap; }
.model-list li::before { margin-right: 4px; }
.model-list .leaf::before { visibility: hidden; }
.model-list .root { padding-left: 5px; }
.model-list .insert { height: 14px; padding: 0; align-items: flex-start; }
.model-list .insert::before { flex: 1; margin: 6px 0 0; height: 2px; border: 0; background: linear-gradient(90deg, #b9bdba, #2f8f2f 15%); }
.warn { width: 8px; height: 10px; margin: -8px -2px 0 0; }
.tree-side { flex: 1; display: flex; flex-direction: column; }
.side-space { flex: 1; background: linear-gradient(#2f8f2f, #2f8f2f) 0 510px / 100% 2px no-repeat; }
.tree-scroll { width: 16px; margin-bottom: 15px; }
.frame { position: absolute; left: 10px; top: 50px; width: 393px; height: 741px; border: 3px solid #f00; pointer-events: none; }
.note { position: absolute; left: 144px; top: 415px; color: #f00; font: 500 29px/33px "Noto Sans CJK SC", sans-serif; white-space: nowrap;
  text-shadow: 3px 0 #fff, -3px 0 #fff, 0 3px #fff, 0 -3px #fff, 2px 2px #fff, -2px 2px #fff, 2px -2px #fff, -2px -2px #fff, 4px 4px 4px #555; }

/* status bar */
.status { flex: none; height: 39px; display: flex; align-items: center; padding-top: 5px; border-top: 1px solid #7f8989; border-bottom: 1px solid #a9adad; }
.s-btn { width: 14px; height: 22px; background: #c8cccd; border: 1px solid #8b9091; border-left: 0; overflow: hidden; }
.s-btn + svg { margin: 0 9px 0 6px; }
.s-sep { width: 1px; height: 22px; margin: 0 17px 0 12px; background: #92989a; }
.s-msg { font-size: 11px; padding-bottom: 10px; white-space: nowrap; }

/* forum watermark */
.mark { position: absolute; right: 5px; bottom: 5px; width: 206px; height: 62px; display: flex; background: rgba(255, 255, 255, .35); }
.mark-logo { width: 60px; height: 58px; margin-top: 2px; opacity: .7; }
.mark-text { display: flex; flex-direction: column; padding: 4px 0 0 10px; }
.mark-text strong { color: #1f7a45; opacity: .8; font: 900 29px/32px "Noto Sans CJK SC", sans-serif; }
.mark-text span { margin-left: -12px; color: #8fc9bc; opacity: .7; font-size: 15px; line-height: 24px; }
```
